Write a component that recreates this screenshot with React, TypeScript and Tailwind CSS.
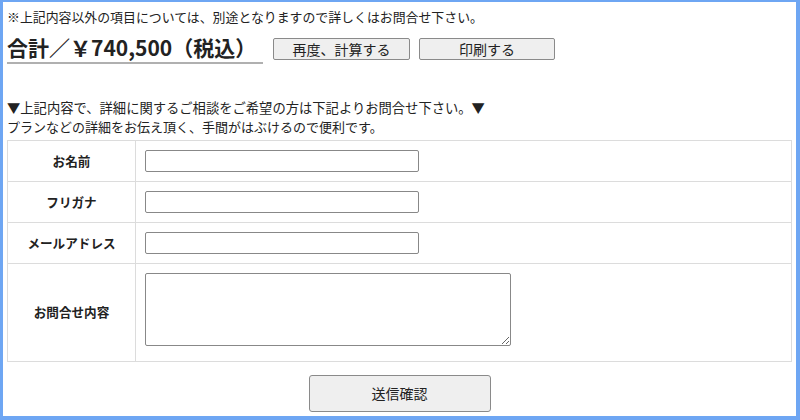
const Field = ({label, children, tall}: {label: string; children: React.ReactNode; tall?: boolean}) => (
    <div className={`flex border-b border-[#dcdcdc] last:border-b-0 ${tall ? "h-[97px]" : "h-[41px]"}`}>
        <div className="w-[128px] shrink-0 border-r border-[#dcdcdc] flex items-center justify-center text-[12.6px] font-bold text-[#222]">
            {label}
        </div>
        <div className={`flex pl-[9px] ${tall ? "items-start pt-[9px]" : "items-center"}`}>
            {children}
        </div>
    </div>
)

const App = () => {
    return (
        <div
            className="w-[800px] h-[420px] bg-white border-t-2 border-l-[3px] border-r-4 border-b-4 border-[#6ea6f3] overflow-hidden text-[#222]"
            style={{fontFamily: '"Noto Sans CJK JP", "Noto Sans", sans-serif'}}
        >
            <div className="pl-[4px] pr-[4px]">
                <p className="text-[12.9px] leading-[18px] pt-[6px]">
                    ※上記内容以外の項目については、別途となりますので詳しくはお問合せ下さい。
                </p>
                <div className="flex items-start mt-[8px]">
                    <div className="w-[256px] border-b-2 border-[#b0b0b0] text-[21px] leading-[27px] font-bold pb-[1px]">
                        合計／￥740,500（税込）
                    </div>
                    <button className="ml-[10px] mt-[4px] w-[137px] h-[22px] bg-[#efefef] border border-[#8a8a8a] rounded-[2px] text-[14px] leading-none">
                        再度、計算する
                    </button>
                    <button className="ml-[9px] mt-[4px] w-[136px] h-[22px] bg-[#efefef] border border-[#8a8a8a] rounded-[2px] text-[14px] leading-none">
                        印刷する
                    </button>
                </div>
                <p className="text-[13.3px] leading-[20px] mt-[34px]">
                    ▼上記内容で、詳細に関するご相談をご希望の方は下記よりお問合せ下さい。▼
                </p>
                <p className="text-[13px] leading-[18px]">
                    プランなどの詳細をお伝え頂く、手間がはぶけるので便利です。
                </p>
                <div className="mt-[4px] w-[785px] border border-[#dcdcdc]">
                    <Field label="お名前">
                        <input className="w-[274px] h-[22px] border border-[#888] rounded-[2px] bg-white"/>
                    </Field>
                    <Field label="フリガナ">
                        <input className="w-[274px] h-[22px] border border-[#888] rounded-[2px] bg-white"/>
                    </Field>
                    <Field label="メールアドレス">
                        <input className="w-[274px] h-[22px] border border-[#888] rounded-[2px] bg-white"/>
                    </Field>
                    <Field label="お問合せ内容" tall>
                        <textarea className="w-[366px] h-[73px] border border-[#888] rounded-[2px] bg-white"/>
                    </Field>
                </div>
                <div className="flex justify-center w-[785px] mt-[13px]">
                    <button className="w-[182px] h-[37px] bg-[#efefef] border border-[#8a8a8a] rounded-[3px] text-[14px]">
                        送信確認
                    </button>
                </div>
            </div>
        </div>
    )
}

export default App;
